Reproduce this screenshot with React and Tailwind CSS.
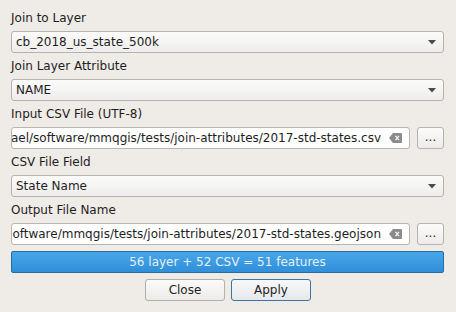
import React from "react";

function Arrow() {
  return (
    <svg width="8" height="5" viewBox="0 0 8 5" className="shrink-0">
      <path d="M0 0 H8 L4 4.5 Z" fill="#4d4b49" />
    </svg>
  );
}

function ClearIcon() {
  return (
    <svg width="13" height="10" viewBox="0 0 13 10" className="shrink-0">
      <path d="M4 0 H12 Q13 0 13 1 V9 Q13 10 12 10 H4 L0 5 Z" fill="#8d8b89" />
      <path d="M6.5 2.8 L10 7.2 M10 2.8 L6.5 7.2" stroke="#f4f3f2" strokeWidth="1.3" />
    </svg>
  );
}

function Combo({ text }) {
  return (
    <div className="h-[22px] flex items-center justify-between rounded-[3px] border border-[#b6b2ae] bg-gradient-to-b from-[#fbfbfa] to-[#efedeb] pl-[4px] pr-[7px] text-[#1e1e1e]">
      <span className="whitespace-nowrap">{text}</span>
      <Arrow />
    </div>
  );
}

function FileRow({ text }) {
  return (
    <div className="flex h-[22px] gap-[7px]">
      <div className="flex-1 min-w-0 flex items-center rounded-[3px] border border-[#b9b5b1] bg-white pr-[7px]">
        <div className="flex-1 min-w-0 overflow-hidden flex justify-end whitespace-nowrap text-[#1e1e1e]">
          <span className="shrink-0">{text}</span>
        </div>
        <div className="ml-[8px]"><ClearIcon /></div>
      </div>
      <div className="w-[27px] flex items-center justify-center rounded-[3px] border border-[#b6b2ae] bg-gradient-to-b from-[#fbfbfa] to-[#eeecea] text-[#1e1e1e] pb-[2px]">
        ...
      </div>
    </div>
  );
}

function Label({ children }) {
  return <div className="h-[14px] leading-[14px] text-[#1e1e1e] whitespace-nowrap">{children}</div>;
}

export default function App() {
  return (
    <div className="w-[456px] h-[312px] bg-[#efebe7] font-['DejaVu_Sans',sans-serif] text-[12px] leading-[14px] pt-[11px] pl-[11px] pr-[12px] flex flex-col gap-[6px] overflow-hidden">
      <Label>Join to Layer</Label>
      <Combo text="cb_2018_us_state_500k" />
      <Label>Join Layer Attribute</Label>
      <Combo text="NAME" />
      <Label>Input CSV File (UTF-8)</Label>
      <FileRow text="ael/software/mmqgis/tests/join-attributes/2017-std-states.csv" />
      <Label>CSV File Field</Label>
      <Combo text="State Name" />
      <Label>Output File Name</Label>
      <FileRow text="oftware/mmqgis/tests/join-attributes/2017-std-states.geojson" />
      <div className="h-[22px] flex items-center justify-center rounded-[2px] border border-[#2b6c9f] bg-gradient-to-b from-[#48a6e8] to-[#308fd9] text-[#e4f0fa] whitespace-nowrap">
        56 layer + 52 CSV = 51 features
      </div>
      <div className="flex justify-center gap-[6px] pl-[1px]">
        <div className="w-[80px] h-[22px] flex items-center justify-center rounded-[3px] border border-[#b3afab] bg-gradient-to-b from-[#fbfbfa] to-[#edebe9] text-[#1e1e1e]">
          Close
        </div>
        <div className="w-[80px] h-[22px] flex items-center justify-center rounded-[3px] border border-[#3f73a0] bg-gradient-to-b from-[#f7f8f9] to-[#e6e9ec] text-[#1e1e1e]">
          Apply
        </div>
      </div>
    </div>
  );
}
